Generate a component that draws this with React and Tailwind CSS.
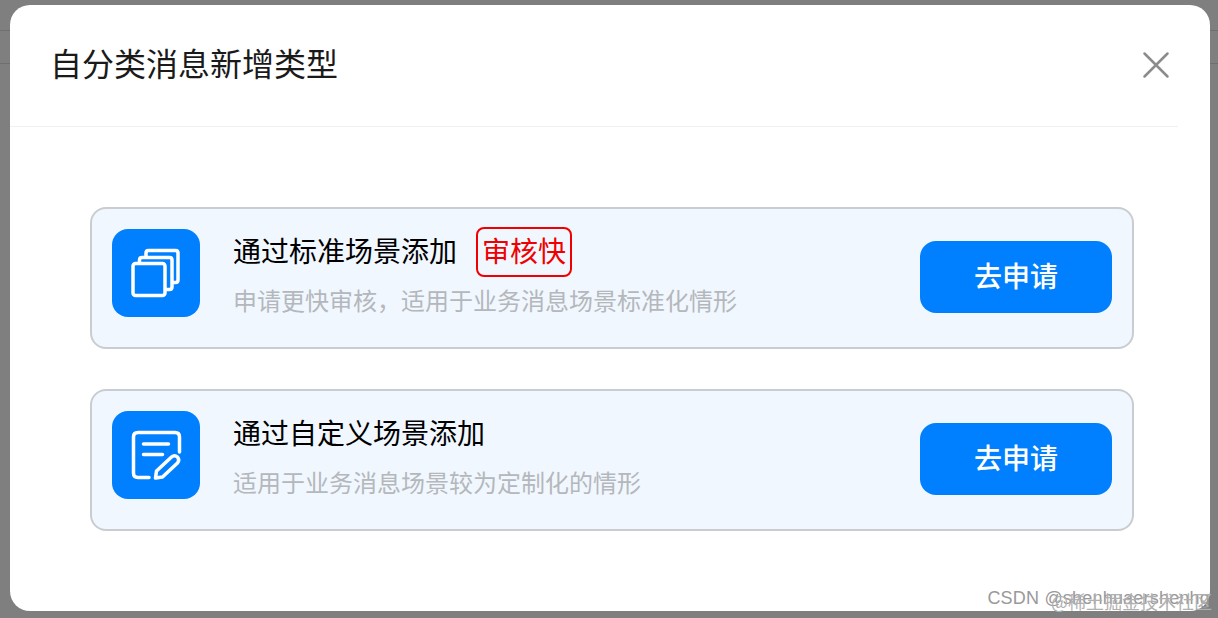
const cjk = "font-['Noto_Sans_CJK_SC','Noto_Sans',sans-serif]";

function StackIcon() {
  return (
    <svg width="88" height="88" viewBox="0 0 88 88" fill="none" stroke="#fff" strokeWidth="3.500" strokeLinecap="round" strokeLinejoin="round">
      <path d="M34 27 V24 Q34 21.500 36.500 21.500 H63.500 Q66 21.500 66 24 V51 Q66 53.500 63.500 53.500 H61" />
      <path d="M27.500 34 V31 Q27.500 28.500 30 28.500 H57.500 Q60 28.500 60 31 V58 Q60 60.500 57.500 60.500 H54" />
      <rect x="21" y="34.500" width="32" height="32" rx="2.500" />
    </svg>
  );
}

function EditIcon() {
  return (
    <svg width="88" height="88" viewBox="0 0 88 88" fill="none" stroke="#fff" strokeWidth="3.500" strokeLinecap="round" strokeLinejoin="round">
      <path d="M37 66.500 H26 Q21.500 66.500 21.500 62 V26 Q21.500 21.500 26 21.500 H63 Q67.500 21.500 67.500 26 V41" />
      <path d="M31.500 33 H56.500 M31.500 43.500 H50.500" />
      <path d="M43.500 67 L44.500 60 L59.500 46 Q62.500 43.500 65.500 46 Q68 49 65.500 52 L50.500 66 Z" />
    </svg>
  );
}

function SceneCard({ icon, title, badge, desc }) {
  return (
    <div className="flex h-[142px] w-[1044px] items-center rounded-2xl border-2 border-[#c9cdd1] bg-[#f1f7fe] px-5">
      <div className="mb-[10px] flex h-[88px] w-[88px] shrink-0 items-center justify-center rounded-2xl bg-[#0080ff]">
        {icon}
      </div>
      <div className="mb-[13px] ml-[33px] flex-1">
        <div className="flex h-[48px] items-center">
          <span className="text-[28px] leading-[48px] text-black">{title}</span>
          {badge && (
            <span className="ml-[19px] mt-1 flex h-[50px] w-[96px] items-center justify-center rounded-lg border-2 border-[#f00000] pb-[3px] text-[28px] text-[#f00000]">
              {badge}
            </span>
          )}
        </div>
        <p className="mt-2 text-[24px] leading-9 text-[#b4b7bc]">{desc}</p>
      </div>
      <button className="mb-[2px] h-[72px] w-[192px] shrink-0 rounded-2xl bg-[#0080ff] pb-[5px] text-[28px] font-medium text-white">
        去申请
      </button>
    </div>
  );
}

export default function App() {
  return (
    <div className={`relative h-[618px] w-[1218px] overflow-hidden bg-[#7f7f7f] ${cjk}`}>
      <div className="h-[31px] border-b border-[#6f6f6f]" />
      <div className="h-[33px] border-b border-[#6f6f6f]" />

      <div className="absolute left-[10px] top-[5px] h-[606px] w-[1200px] rounded-[20px] bg-white">
        <div className="flex h-[122px] w-[1168px] items-center justify-between border-b border-[#f0f0f0] pl-10 pr-2">
          <h2 className="mb-2 text-[32px] font-normal leading-[48px] text-[#1a1a1a]">自分类消息新增类型</h2>
          <svg className="mb-[2px]" width="28" height="28" viewBox="0 0 28 28" fill="none" stroke="#8c8c8c" strokeWidth="2.500" strokeLinecap="round">
            <path d="M2.500 2.500 L25.500 25.500 M25.500 2.500 L2.500 25.500" />
          </svg>
        </div>

        <div className="flex flex-col gap-10 pl-20 pt-20">
          <SceneCard
            icon={<StackIcon />}
            title="通过标准场景添加"
            badge="审核快"
            desc="申请更快审核，适用于业务消息场景标准化情形"
          />
          <SceneCard
            icon={<EditIcon />}
            title="通过自定义场景添加"
            desc="适用于业务消息场景较为定制化的情形"
          />
        </div>
      </div>

      {/* two watermarks stamped on top of each other */}
      <div className="absolute right-[8px] top-[586px] whitespace-nowrap font-['Liberation_Sans',sans-serif] text-[18px] leading-6 tracking-[0.2px] text-[#999999]">
        CSDN @shenhuaershenhg
      </div>
      <div className="absolute right-[6px] top-[589px] whitespace-nowrap text-[18px] leading-6 text-[#b0b0b0]">
        @稀土掘金技术社区
      </div>
    </div>
  );
}
